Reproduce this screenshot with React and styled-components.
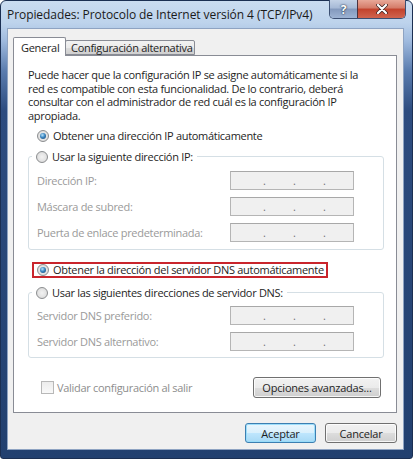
import React from "react";
import styled, { createGlobalStyle } from "styled-components";

const GlobalStyle = createGlobalStyle`
  html, body { margin: 0; padding: 0; }
  body {
    font-family: "Open Sans", "Noto Sans", sans-serif;
    font-size: 11px;
    letter-spacing: -0.3px;
    color: #1e1e1e;
  }
  * { box-sizing: border-box; }
`;

const Window = styled.div`
  width: 413px;
  height: 459px;
  display: flex;
  flex-direction: column;
  padding: 0 8px 8px 6px;
  border: 1px solid #1b2f52;
  border-radius: 6px 6px 3px 3px;
  background: linear-gradient(
    180deg,
    #cadcf0 0px,
    #bdd3ec 22px,
    #9fbade 40px,
    #5a7cae 70px,
    #2d4c7f 110px,
    #22406f 100%
  );
`;

const TitleBar = styled.div`
  height: 27px;
  display: flex;
  justify-content: space-between;
  align-items: flex-start;
`;

const Title = styled.span`
  padding-top: 5px;
  font-size: 12px;
  letter-spacing: -0.07px;
  color: #1a1a1a;
  white-space: nowrap;
`;

const CaptionButtons = styled.div`
  display: flex;
  margin: -1px -2px 0 0;
  border: 1px solid #3b4f72;
  border-top: none;
  border-radius: 0 0 5px 5px;
  overflow: hidden;
`;

const CaptionButton = styled.div`
  width: ${(p) => p.$w}px;
  height: 18px;
  display: flex;
  align-items: center;
  justify-content: center;
  color: #fff;
  font-weight: bold;
  font-size: 12px;
  text-shadow: 0 0 2px #20304a, 0 0 1px #20304a;
  background: ${(p) =>
    p.$close
      ? "linear-gradient(180deg, #e8a898 0%, #d47a67 45%, #c2422c 50%, #d0644f 100%)"
      : "linear-gradient(180deg, #c3d2e6 0%, #a6b9d6 45%, #8399bd 50%, #9db3d3 100%)"};
  border-left: ${(p) => (p.$close ? "1px solid #4b3340" : "none")};
`;

const Client = styled.div`
  height: 422px;
  background: #f0f0f0;
  border: 1px solid #8ea3c2;
  padding: 8px 6px 0 5px;
  display: flex;
  flex-direction: column;
`;

const TabStrip = styled.div`
  height: 18px;
  display: flex;
  align-items: flex-end;
`;

const Tab = styled.div`
  position: relative;
  height: ${(p) => (p.$active ? 19 : 15)}px;
  width: ${(p) => p.$w}px;
  margin-bottom: ${(p) => (p.$active ? -1 : 0)}px;
  margin-left: ${(p) => (p.$active ? 0 : -1)}px;
  z-index: ${(p) => (p.$active ? 1 : 0)};
  border: 1px solid #898c95;
  border-bottom: ${(p) => (p.$active ? "none" : "1px solid #898c95")};
  border-radius: 2px 2px 0 0;
  background: ${(p) =>
    p.$active ? "#fff" : "linear-gradient(180deg, #f2f2f2 0%, #ebebeb 50%, #dddddd 51%, #cfcfcf 100%)"};
  padding-left: ${(p) => (p.$active ? 7 : 5)}px;
  display: flex;
  align-items: center;
  white-space: nowrap;
  color: #1e1e1e;
`;

const Panel = styled.div`
  height: 358px;
  background: #fff;
  border: 1px solid #898c95;
  padding: 12px 12px 0 14px;
  display: flex;
  flex-direction: column;
`;

const Intro = styled.p`
  margin: 0;
  line-height: 13.7px;
  white-space: nowrap;
`;

const RadioRow = styled.label`
  display: flex;
  align-items: center;
  gap: 4px;
  height: 14px;
  margin-left: ${(p) => p.$indent || 0}px;
  margin-top: ${(p) => p.$top || 0}px;
  white-space: nowrap;
  color: #1e1e1e;
`;

const Radio = styled.span`
  flex: none;
  width: 12px;
  height: 12px;
  border-radius: 50%;
  border: 1px solid #8b8d8f;
  background: radial-gradient(circle at 50% 50%, #f2f2f2 0%, #e3e3e3 55%, #cfcfcf 100%);
  display: inline-flex;
  align-items: center;
  justify-content: center;

  &::after {
    content: "";
    width: 6px;
    height: 6px;
    border-radius: 50%;
    background: ${(p) =>
      p.$checked
        ? "radial-gradient(circle at 40% 35%, #b8e4fb 0%, #3b85c0 45%, #15426c 100%)"
        : "transparent"};
  }
`;

const Highlight = styled.div`
  align-self: flex-start;
  height: 16px;
  margin: 12px 0 0 4px;
  padding: 0 2px 0 3px;
  border: 2px solid #c9252c;
  display: flex;
  align-items: center;
`;

const Group = styled.fieldset`
  margin: ${(p) => p.$top}px 0 0 0;
  padding: ${(p) => p.$padTop}px 29px ${(p) => p.$padBottom}px 8px;
  border: 1px solid #d5dfe5;
  border-radius: 3px;
  min-width: 0;
  display: flex;
  flex-direction: column;
  gap: 7px;
`;

const Legend = styled.legend`
  margin-left: -5px;
  padding: 0 4px;
  height: 14px;
`;

const FieldRow = styled.div`
  height: 19px;
  display: flex;
  align-items: center;
  justify-content: space-between;
`;

const FieldLabel = styled.span`
  color: #9a9a9a;
  white-space: nowrap;
`;

const IpBox = styled.div`
  width: 124px;
  height: 19px;
  background: #f0f0f0;
  border: 1px solid #b5b5b5;
  border-top-color: #a8a8a8;
  padding-left: 32px;
  display: flex;
  align-items: center;
`;

const IpDot = styled.span`
  width: 30px;
  flex: none;
  color: #707070;
  line-height: 17px;
`;

const BottomRow = styled.div`
  margin-top: 19px;
  height: 21px;
  display: flex;
  align-items: center;
  justify-content: space-between;
`;

const CheckRow = styled.label`
  display: flex;
  align-items: center;
  gap: 3px;
  margin-left: 13px;
  color: #8d8d8d;
  white-space: nowrap;
`;

const Checkbox = styled.span`
  width: 13px;
  height: 13px;
  border: 1px solid #b8b8b8;
  background: linear-gradient(180deg, #ececec 0%, #f9f9f9 100%);
`;

const Button = styled.button`
  width: ${(p) => p.$w}px;
  height: ${(p) => p.$h || 20}px;
  margin-right: ${(p) => p.$right || 0}px;
  padding: 0;
  font: inherit;
  font-size: 11px;
  letter-spacing: -0.2px;
  color: #1e1e1e;
  border: 1px solid ${(p) => (p.$default ? "#3c7fb1" : "#707070")};
  border-radius: 3px;
  background: ${(p) =>
    p.$default
      ? "linear-gradient(180deg, #eaf6fd 0%, #d9f0fc 50%, #bee6fd 51%, #a7d9f5 100%)"
      : "linear-gradient(180deg, #f2f2f2 0%, #ebebeb 50%, #dddddd 51%, #cfcfcf 100%)"};
  box-shadow: inset 0 0 0 1px
    ${(p) => (p.$default ? "rgba(150, 220, 250, 0.9)" : "rgba(255, 255, 255, 0.8)")};
`;

const DialogButtons = styled.div`
  margin-top: 10px;
  display: flex;
  justify-content: flex-end;
  gap: 9px;
`;

const IpField = ({ label }) => (
  <FieldRow>
    <FieldLabel>{label}</FieldLabel>
    <IpBox>
      <IpDot>.</IpDot>
      <IpDot>.</IpDot>
      <IpDot>.</IpDot>
    </IpBox>
  </FieldRow>
);

const CloseIcon = () => (
  <svg width="12" height="10" viewBox="0 0 12 10">
    <path d="M2 1 L10 9 M10 1 L2 9" stroke="#3a2020" strokeWidth="3.6" strokeLinecap="round" />
    <path d="M2 1 L10 9 M10 1 L2 9" stroke="#fff" strokeWidth="2.2" strokeLinecap="round" />
  </svg>
);

export default function App() {
  return (
    <>
      <GlobalStyle />
      <Window>
        <TitleBar>
          <Title>Propiedades: Protocolo de Internet versión 4 (TCP/IPv4)</Title>
          <CaptionButtons>
            <CaptionButton $w={27}>?</CaptionButton>
            <CaptionButton $w={48} $close>
              <CloseIcon />
            </CaptionButton>
          </CaptionButtons>
        </TitleBar>

        <Client>
          <TabStrip>
            <Tab $active $w={53}>General</Tab>
            <Tab $w={130}>Configuración alternativa</Tab>
          </TabStrip>

          <Panel>
            <Intro>
              Puede hacer que la configuración IP se asigne automáticamente si la
              <br />
              red es compatible con esta funcionalidad. De lo contrario, deberá
              <br />
              consultar con el administrador de red cuál es la configuración IP
              <br />
              apropiada.
            </Intro>

            <RadioRow $indent={9} $top={6}>
              <Radio $checked />
              Obtener una dirección IP automáticamente
            </RadioRow>

            <Group $top={7} $padTop={7} $padBottom={7}>
              <Legend>
                <RadioRow>
                  <Radio />
                  Usar la siguiente dirección IP:
                </RadioRow>
              </Legend>
              <IpField label="Dirección IP:" />
              <IpField label="Máscara de subred:" />
              <IpField label="Puerta de enlace predeterminada:" />
            </Group>

            <Highlight>
              <RadioRow>
                <Radio $checked />
                Obtener la dirección del servidor DNS automáticamente
              </RadioRow>
            </Highlight>

            <Group $top={8} $padTop={6} $padBottom={6}>
              <Legend>
                <RadioRow>
                  <Radio />
                  Usar las siguientes direcciones de servidor DNS:
                </RadioRow>
              </Legend>
              <IpField label="Servidor DNS preferido:" />
              <IpField label="Servidor DNS alternativo:" />
            </Group>

            <BottomRow>
              <CheckRow>
                <Checkbox />
                Validar configuración al salir
              </CheckRow>
              <Button $w={128} $h={21} $right={3}>
                Opciones avanzadas...
              </Button>
            </BottomRow>
          </Panel>

          <DialogButtons>
            <Button $w={71} $default>
              Aceptar
            </Button>
            <Button $w={72}>Cancelar</Button>
          </DialogButtons>
        </Client>
      </Window>
    </>
  );
}
